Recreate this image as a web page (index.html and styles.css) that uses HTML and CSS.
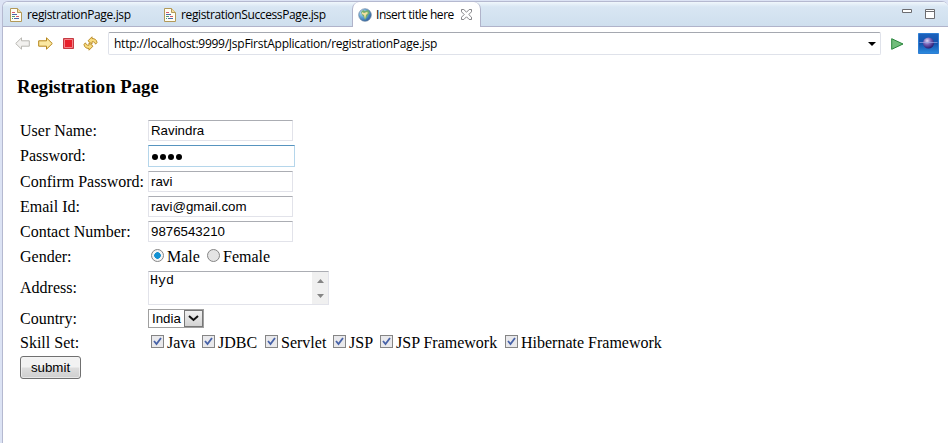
FILE: index.html
```html
<!DOCTYPE html>
<html lang="en">
<head>
<meta charset="utf-8">
<title>Insert title here</title>
<link rel="stylesheet" href="styles.css">
</head>
<body>
<div class="editor">
  <div class="tabs">
    <div class="tab first">
      <svg class="doc" width="12" height="14" viewBox="0 0 12 14"><path d="M.5.5h7l4 4v9H.5z" fill="#fffef5" stroke="#b29958"/><path d="M7.5.5v4h4" fill="#f4dda0" stroke="#b29958"/><path d="M2 4.5h3M6 8.5h3" stroke="#d35b6d"/><path d="M2 6.5h5M4 10.5h5" stroke="#4868ad"/><path d="M2 8.5h3M2 10.5h1" stroke="#4b9a78"/></svg>
      <span class="t1">registrationPage.jsp</span>
    </div>
    <div class="tab second">
      <svg class="doc" width="12" height="14" viewBox="0 0 12 14"><path d="M.5.5h7l4 4v9H.5z" fill="#fffef5" stroke="#b29958"/><path d="M7.5.5v4h4" fill="#f4dda0" stroke="#b29958"/><path d="M2 4.5h3M6 8.5h3" stroke="#d35b6d"/><path d="M2 6.5h5M4 10.5h5" stroke="#4868ad"/><path d="M2 8.5h3M2 10.5h1" stroke="#4b9a78"/></svg>
      <span class="t2">registrationSuccessPage.jsp</span>
    </div>
    <div class="tab active">
      <svg class="globe" width="14" height="14" viewBox="0 0 14 14"><defs><radialGradient id="g" cx=".3" cy=".3" r=".75"><stop offset="0" stop-color="#d3e9f7"/><stop offset=".5" stop-color="#62a5d8"/><stop offset="1" stop-color="#2c62a0"/></radialGradient></defs><circle cx="7" cy="7" r="6.300" fill="url(#g)" stroke="#7488a0" stroke-width=".7"/><path d="M3 4l2-2 2 1 3-1 2 3-2 2-1 2-2 3-1-3-2-2z" fill="#74ad70"/><path d="M4 4l2 1 3-1 1 1-2 2-1 4-1-4-2-1z" fill="#f3e0a0"/></svg>
      <span class="t3">Insert title here</span>
      <svg class="close" width="11" height="11" viewBox="0 0 11 11"><path d="M.5.5h2.300l2.700 2.700L8.200.5h2.300v2.300L7.800 5.500l2.700 2.700v2.300H8.200L5.500 7.800l-2.700 2.700H.5V8.200l2.700-2.700L.5 2.800z" fill="#fff" stroke="#77777c" stroke-width=".9"/></svg>
    </div>
    <div class="window-tools">
      <svg width="10" height="4" viewBox="0 0 10 4"><path d="M.5.5h9v3h-9z" fill="#fff" stroke="#6c6c70"/></svg>
      <svg width="10" height="10" viewBox="0 0 10 10"><path d="M.5.5h9v9h-9zM0 2.500h10" fill="#fff" stroke="#6c6c70"/></svg>
    </div>
  </div>
  <div class="toolbar">
    <svg class="back" width="15" height="13" viewBox="0 0 15 13"><path d="M.7 6.500L6.500.8v3h7.800v5.400H6.500v3z" fill="#f2f1ef" stroke="#b9b8b3"/></svg>
    <svg class="fwd" width="15" height="13" viewBox="0 0 15 13"><path d="M14.300 6.500L8.500.8v3H.7v5.400h7.800v3z" fill="#fbe8a2" stroke="#b5851b"/></svg>
    <svg class="stop" width="11" height="11" viewBox="0 0 11 11"><path d="M.5.5h10v10H.5z" fill="#e8202b" stroke="#c43b43"/><path d="M1.500 1.500h8v8h-8z" fill="none" stroke="#f4848a"/></svg>
    <svg class="refresh" width="15" height="15" viewBox="0 0 15 15"><path d="M5 4.800L9 .8v1.700c2.800 0 4.800 1.300 5 4.200l-1.500 1.500C12 6.300 11 5.600 9 5.800v2.400zM10 10.200L6 14.200v-1.700c-2.800 0-4.800-1.300-5-4.200l1.500-1.500C3 8.700 4 9.400 6 9.200V6.800z" fill="#f8dc82" stroke="#b5851b" stroke-width=".9"/></svg>
    <div class="address"><span class="url">http://localhost:9999/JspFirstApplication/registrationPage.jsp</span>
      <svg width="8" height="4" viewBox="0 0 8 4"><path d="M0 0h8L4 4z" fill="#000"/></svg></div>
    <svg class="go" width="13" height="12" viewBox="0 0 13 12"><path d="M.7.700L12 6 .7 11.300z" fill="#71bd7b" stroke="#28853b"/></svg>
    <svg class="logo" width="21" height="21" viewBox="0 0 21 21"><defs><linearGradient id="l" x2="0" y2="1"><stop stop-color="#1d62bd"/><stop offset=".5" stop-color="#1352ac"/><stop offset="1" stop-color="#2b8be0"/></linearGradient><radialGradient id="p" cx=".38" cy=".3" r=".7"><stop stop-color="#e2d8f4"/><stop offset=".5" stop-color="#7661b6"/><stop offset="1" stop-color="#2d1b70"/></radialGradient></defs><path d="M.5.5h20v20H.5z" fill="url(#l)" stroke="#2e7ed3"/><circle cx="10.500" cy="10" r="5.500" fill="url(#p)"/><path d="M1.500 9.500h18" stroke="#9aa7e4" stroke-opacity=".7"/></svg>
  </div>
  <main class="page">
    <h3>Registration Page</h3>
    <form class="form">
      <label>User Name:</label><div class="field">Ravindra</div>
      <label>Password:</label><div class="field focus"><i></i><i></i><i></i><i></i></div>
      <label>Confirm Password:</label><div class="field">ravi</div>
      <label>Email Id:</label><div class="field">ravi@gmail.com</div>
      <label>Contact Number:</label><div class="field">9876543210</div>
      <label>Gender:</label>
      <div class="choices"><span class="radio on"></span><span class="male">Male</span><span class="radio"></span><span>Female</span></div>
      <label>Address:</label>
      <div class="area"><span>Hyd</span><div class="scroll"><svg width="7" height="4" viewBox="0 0 7 4"><path d="M0 4h7L3.500 0z" fill="#858585"/></svg><svg width="7" height="4" viewBox="0 0 7 4"><path d="M0 0h7L3.500 4z" fill="#858585"/></svg></div></div>
      <label>Country:</label>
      <div class="select"><span>India</span><div class="drop"><svg width="11" height="7" viewBox="0 0 11 7"><path d="M1 1l4.500 4L10 1" fill="none" stroke="#111" stroke-width="2"/></svg></div></div>
      <label>Skill Set:</label>
      <div class="choices skills">
        <div class="skill s1"><svg class="check" viewBox="0 0 11 11"><path d="M2 5l2.500 3L9 2"/></svg>Java</div>
        <div class="skill s2"><svg class="check" viewBox="0 0 11 11"><path d="M2 5l2.500 3L9 2"/></svg>JDBC</div>
        <div class="skill s3"><svg class="check" viewBox="0 0 11 11"><path d="M2 5l2.500 3L9 2"/></svg>Servlet</div>
        <div class="skill s4"><svg class="check" viewBox="0 0 11 11"><path d="M2 5l2.500 3L9 2"/></svg>JSP</div>
        <div class="skill s5"><svg class="check" viewBox="0 0 11 11"><path d="M2 5l2.500 3L9 2"/></svg>JSP Framework</div>
        <div class="skill"><svg class="check" viewBox="0 0 11 11"><path d="M2 5l2.500 3L9 2"/></svg>Hibernate Framework</div>
      </div>
      <div class="submit">submit</div>
    </form>
  </main>
</div>
</body>
</html>
```
FILE: styles.css
```css
* { box-sizing: border-box; }
body { margin: 0; width: 948px; height: 443px; overflow: hidden; background: #dce3f4; }
svg { display: block; flex: none; }
.editor { margin: 1px 0 0 2px; height: 442px; border: 1px solid #b5b9d0; border-width: 1px 0 0 1px; border-radius: 6px 6px 0 0; background: #fff; overflow: hidden; }
.tabs { height: 25px; display: flex; border-bottom: 1px solid #b0b3ca; background: linear-gradient(#f0f7fc 0, #d8e6f3 5px, #cfdfee 100%); font: 12px/24px "Open Sans", sans-serif; color: #000; white-space: nowrap; }
.tab { display: flex; align-items: center; height: 25px; }
.doc { margin-right: 5px; }
.first { width: 154px; padding-left: 7px; }
.second { width: 195px; padding-left: 7px; }
.active { width: 129px; padding-left: 5px; background: #fff; border: 1px solid #b0b3ca; border-width: 0 1px 0 1px; border-radius: 7px 7px 0 0; }
.globe { margin-right: 4px; }
.t1 { width: 104px; letter-spacing: -.37px; }
.t2 { width: 146px; letter-spacing: -.37px; }
.t3 { width: 80px; letter-spacing: -.46px; }
.close { margin-left: 5px; }
.window-tools { margin-left: auto; width: 46px; display: flex; gap: 13px; padding-top: 7px; }
.toolbar { height: 33px; display: flex; align-items: center; padding-left: 12px; }
.back { margin-right: 8px; }
.stop { margin: 0 9px 0 10px; }
.address { margin-left: 10px; width: 773px; height: 23px; border: 1px solid #dfe2ea; border-top-color: #a5a8b0; border-radius: 2px; display: flex; align-items: center; justify-content: space-between; padding: 0 4px 0 5px; font: 12px/20px "Open Sans", sans-serif; }
.url { letter-spacing: -.255px; white-space: nowrap; }
.go { margin-left: 10px; }
.logo { margin-left: 14px; }
.page { padding: 16px 0 0 14px; font: 16px/20px "Liberation Serif", serif; color: #000; }
h3 { margin: 0 0 20px; font-size: 18.7px; line-height: 22px; }
.form { display: grid; grid-template-columns: 128px 600px; grid-template-rows: 25px 26px 25px 25px 25px 25px 38px 23px 25px 25px; align-items: center; padding-left: 3px; white-space: nowrap; }
.field { width: 145px; height: 21px; border: 1px solid #e2e3ea; border-top-color: #abadb3; padding-left: 2px; font: 13.3px/19px "Liberation Sans", sans-serif; }
.focus { width: 147px; height: 22px; border-color: #b5d6eb; border-top-color: #5794bf; display: flex; gap: 2px; align-items: center; padding: 2px 0 0 3px; }
.focus i { width: 6px; height: 6px; border-radius: 50%; background: #000; }
.choices { display: flex; align-items: center; padding-left: 3px; }
.radio { width: 13px; height: 13px; border: 1px solid #858585; border-radius: 50%; background: #e4e4e4; margin: -2px 3px 0 0; }
.on { background: radial-gradient(circle, #1491d2 0 3px, #f4f4f4 3.6px); }
.male { width: 40px; }
.area { width: 181px; height: 34px; border: 1px solid #e2e3ea; border-top-color: #abadb3; display: flex; justify-content: space-between; padding-left: 1px; font: 13.3px/17px "Liberation Mono", monospace; }
.scroll { width: 16px; background: #f0f0f0; display: flex; flex-direction: column; align-items: center; justify-content: space-between; padding: 7px 0 6px; }
.select { width: 56px; height: 19px; border: 1px solid #a0a0a0; display: flex; justify-content: space-between; padding-left: 3px; font: 13.3px/17px "Liberation Sans", sans-serif; }
.drop { width: 19px; height: 17px; border: 1px solid #777; background: linear-gradient(#f1f1f1, #d3d3d3); display: flex; align-items: center; justify-content: center; }
.skill { display: flex; align-items: center; }
.s1 { width: 51px; }
.s2 { width: 63px; }
.s3 { width: 68px; }
.s4 { width: 47px; }
.s5 { width: 125px; }
.check { width: 13px; height: 13px; border: 1px solid #858585; background: #e9e9ec; margin: -3px 3px 0 0; }
.check path { fill: none; stroke: #4762a8; stroke-width: 1.8; }
.submit { width: 61px; height: 23px; border: 1px solid #707070; border-radius: 3px; background: linear-gradient(#f2f2f2 0 48%, #ddd 52%, #cfcfcf); box-shadow: inset 0 0 0 1px #f5f5f5aa; text-align: center; font: 13.3px/21px "Liberation Sans", sans-serif; }
```
